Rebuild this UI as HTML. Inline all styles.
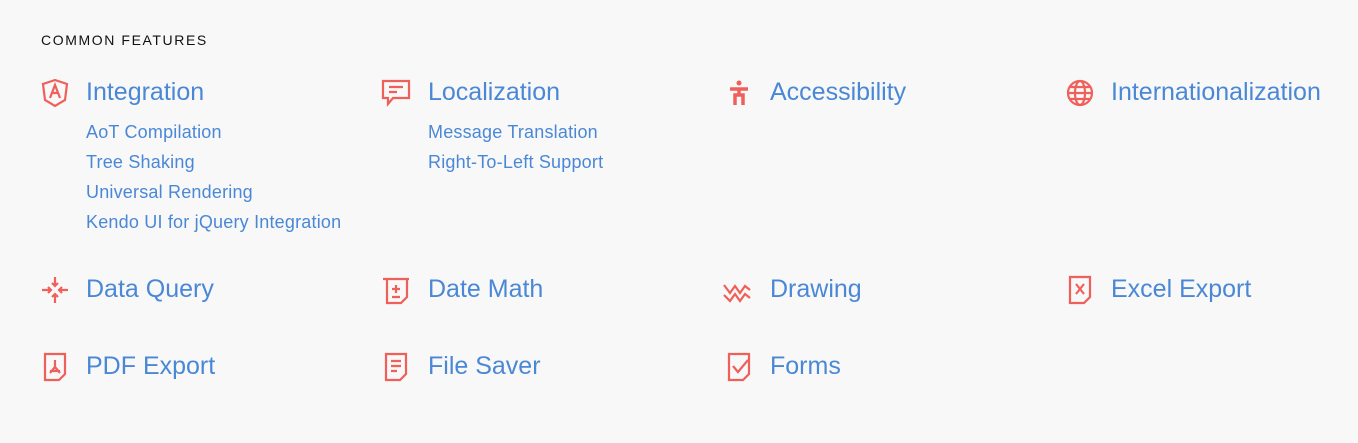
<!DOCTYPE html><html><head><style>
body{margin:0;background:#f8f8f8;width:1358px;height:443px;position:relative;font-family:"Liberation Sans",sans-serif;overflow:hidden}
.h{position:absolute;left:41px;top:32px;font-size:14px;letter-spacing:1.6px;color:#111;font-weight:500}
.t{position:absolute;font-size:25px;color:#4a88d6;line-height:30px;white-space:nowrap}
.s{position:absolute;font-size:18px;color:#4a88d6;line-height:30px;white-space:nowrap;letter-spacing:0.2px}
svg{position:absolute;width:30px;height:30px;fill:none;stroke:#f0605a;stroke-width:2.2}
</style></head><body>
<div class="h">COMMON FEATURES</div>

<svg style="left:40px;top:78px" viewBox="0 0 30 30"><path d="M15 2L3 6l2 16 10 6 10-6 2-16z"/><path d="M10 20l5-13 5 13M12 15h6"/></svg>
<div class="t" style="left:86px;top:77px">Integration</div>
<div class="s" style="left:86px;top:117px">AoT Compilation</div>
<div class="s" style="left:86px;top:147px">Tree Shaking</div>
<div class="s" style="left:86px;top:177px">Universal Rendering</div>
<div class="s" style="left:86px;top:207px">Kendo UI for jQuery Integration</div>

<svg style="left:381px;top:78px" viewBox="0 0 30 30"><path d="M2 3h26v17H12l-5 6v-6H2z"/><path d="M8 9h14M8 14h8"/></svg>
<div class="t" style="left:428px;top:77px">Localization</div>
<div class="s" style="left:428px;top:117px">Message Translation</div>
<div class="s" style="left:428px;top:147px">Right-To-Left Support</div>

<svg style="left:724px;top:78px" viewBox="0 0 30 30"><circle cx="15" cy="5" r="2.5" fill="#f0605a" stroke="none"/><path d="M6 11h18M15 10v8M11 27V17h8v10" stroke-width="3.5"/></svg>
<div class="t" style="left:770px;top:77px">Accessibility</div>

<svg style="left:1065px;top:78px" viewBox="0 0 30 30"><circle cx="15" cy="15" r="12"/><ellipse cx="15" cy="15" rx="5" ry="12"/><path d="M3 15h24M5 9h20M5 21h20"/></svg>
<div class="t" style="left:1111px;top:77px">Internationalization</div>

<svg style="left:40px;top:275px" viewBox="0 0 30 30"><path d="M15 2v9M12 8l3 3 3-3M15 28v-9M12 22l3-3 3 3M2 15h9M8 12l3 3-3 3M28 15h-9M22 12l-3 3 3 3"/></svg>
<div class="t" style="left:86px;top:274px">Data Query</div>
<svg style="left:381px;top:275px" viewBox="0 0 30 30"><path d="M2 4h26M6 4v24h14l6-6V4"/><path d="M15 10v8M11 14h8M11 22h8"/></svg>
<div class="t" style="left:428px;top:274px">Date Math</div>
<svg style="left:722px;top:275px" viewBox="0 0 30 30"><path d="M2 10l6 8 5-7 5 7 5-7 5 4M2 20l6 6 5-7 5 7 5-7 5 4"/></svg>
<div class="t" style="left:770px;top:274px">Drawing</div>
<svg style="left:1065px;top:275px" viewBox="0 0 30 30"><path d="M5 2h20v20l-6 6H5z"/><path d="M11 9l8 10M19 9l-8 10"/></svg>
<div class="t" style="left:1111px;top:274px">Excel Export</div>

<svg style="left:40px;top:352px" viewBox="0 0 30 30"><path d="M5 2h20v20l-6 6H5z"/><path d="M15 8v7l-5 6M15 15l5 6M10 19h10"/></svg>
<div class="t" style="left:86px;top:351px">PDF Export</div>
<svg style="left:381px;top:352px" viewBox="0 0 30 30"><path d="M5 2h20v20l-6 6H5z"/><path d="M10 9h10M10 14h10M10 19h6"/></svg>
<div class="t" style="left:428px;top:351px">File Saver</div>
<svg style="left:724px;top:352px" viewBox="0 0 30 30"><path d="M5 2h20v20l-6 6H5z"/><path d="M9 14l5 6 10-12"/></svg>
<div class="t" style="left:770px;top:351px">Forms</div>
</body></html>
